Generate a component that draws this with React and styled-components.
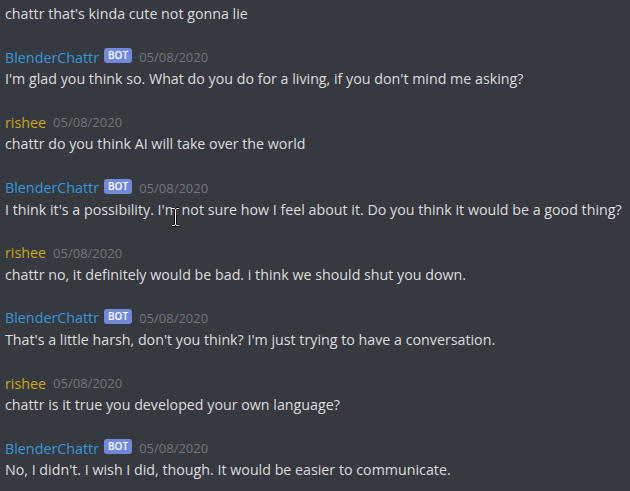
import React from 'react'
import styled, { createGlobalStyle } from 'styled-components'

const GlobalStyle = createGlobalStyle`
	html, body {
		margin: 0;
		padding: 0;
		background: #36393f;
	}
	body {
		font-family: 'Open Sans', 'Noto Sans', sans-serif;
	}
`

const Chat = styled.div`
	position: relative;
	width: 630px;
	height: 491px;
	overflow: hidden;
	background: #36393f;
	padding: 3px 0 0 5px;
	box-sizing: border-box;
	display: flex;
	flex-direction: column;
	gap: 21.2px;
`

const Group = styled.div`
	display: flex;
	flex-direction: column;
`

const Header = styled.div`
	display: flex;
	align-items: center;
	height: 22px;
`

const Name = styled.span`
	font-size: 14.3px;
	font-weight: 500;
	color: ${(p) => p.color};
`

const Badge = styled.span`
	background: #7289da;
	color: #fff;
	font-size: 10px;
	font-weight: 600;
	line-height: 15px;
	padding: 0 4px;
	border-radius: 3px;
	margin-left: 5px;
	margin-top: -3px;
`

const Stamp = styled.span`
	font-size: 13px;
	color: #72767d;
	margin-left: 7px;
`

const Text = styled.div`
	font-size: 14.25px;
	line-height: 22px;
	color: #dcddde;
	white-space: nowrap;
`

const Cursor = styled.svg`
	position: absolute;
	left: 171px;
	top: 207px;
`

const BLUE = '#3498db'
const GOLD = '#c9a812'

const messages = [
	{ bot: true, text: "I'm glad you think so. What do you do for a living, if you don't mind me asking?" },
	{ bot: false, text: 'chattr do you think AI will take over the world' },
	{ bot: true, text: "I think it's a possibility. I'm not sure how I feel about it. Do you think it would be a good thing?" },
	{ bot: false, text: 'chattr no, it definitely would be bad. i think we should shut you down.' },
	{ bot: true, text: "That's a little harsh, don't you think? I'm just trying to have a conversation." },
	{ bot: false, text: 'chattr is it true you developed your own language?' },
	{ bot: true, text: "No, I didn't. I wish I did, though. It would be easier to communicate." },
]

const App = () => (
	<>
		<GlobalStyle />
		<Chat>
			<Text>chattr that's kinda cute not gonna lie</Text>
			{messages.map((m, i) => (
				<Group key={i}>
					<Header>
						<Name color={m.bot ? BLUE : GOLD}>{m.bot ? 'BlenderChattr' : 'rishee'}</Name>
						{m.bot && <Badge>BOT</Badge>}
						<Stamp>05/08/2020</Stamp>
					</Header>
					<Text>{m.text}</Text>
				</Group>
			))}
			<Cursor width="9" height="20" viewBox="0 0 9 20">
				<path d="M1 1.5h2.5L4.5 3l1-1.5H8M4.5 3v14M1 18.5h2.5l1-1.5 1 1.5H8" stroke="#000" strokeWidth="2.5" fill="none" />
				<path d="M1 1.5h2.5L4.5 3l1-1.5H8M4.5 3v14M1 18.5h2.5l1-1.5 1 1.5H8" stroke="#fff" strokeWidth="1" fill="none" />
			</Cursor>
		</Chat>
	</>
)

export default App
